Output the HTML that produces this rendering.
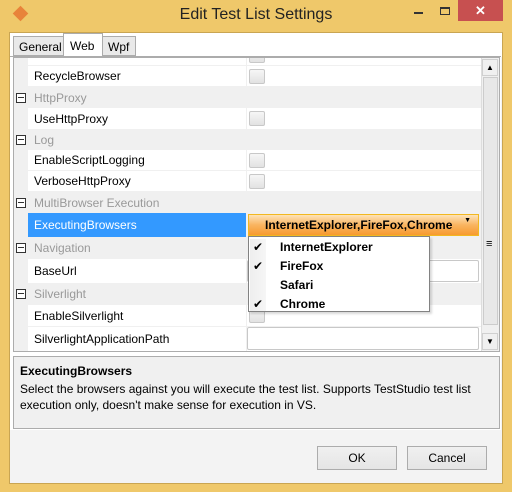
<!DOCTYPE html><html><head><style>
*{box-sizing:border-box;margin:0;padding:0}
body{width:512px;height:492px;background:#efc86a;font-family:"Liberation Sans",sans-serif;font-size:12px;position:relative;overflow:hidden;color:#000}
.a{position:absolute}
.title{left:0;top:6px;width:512px;text-align:center;font-size:16px;color:#222}
.client{left:9px;top:32px;width:494px;height:452px;background:#f3f3f3;border:1px solid #c9a552}
.tab{top:36px;height:20px;border:1px solid #acacac;background:#e9e9e9;font-size:12px;padding:3px 5px 0}
.cat{left:14px;width:467px;background:#f0f0f0;color:#999}
.cat span{position:absolute;left:20px;top:50%;transform:translateY(-50%)}
.box{position:absolute;left:2px;top:50%;margin-top:-5px;width:10px;height:10px;border:1px solid #333;background:#fff}
.box:after{content:"";position:absolute;left:1px;top:3px;width:6px;height:1px;background:#333}
.prop{left:28px;width:218px;background:#fff;padding-left:6px}
.val{left:247px;width:234px;background:#fff;overflow:hidden}
.cb{position:absolute;left:2px;top:3px;width:16px;height:15px;border:1px solid #c8c8c8;background:linear-gradient(#f6f6f6,#e2e2e2);border-radius:2px}
.row{display:flex;align-items:center}
</style></head><body>
<div class="a" style="left:15px;top:8px;width:11px;height:11px;background:#e8833a;transform:rotate(45deg)"></div>
<div class="a title">Edit Test List Settings</div>
<div class="a" style="left:414px;top:12px;width:9px;height:2px;background:#333"></div>
<div class="a" style="left:440px;top:7px;width:10px;height:8px;border:1px solid #333;border-top-width:2px"></div>
<div class="a" style="left:458px;top:0;width:45px;height:21px;background:#c75050;color:#fff;text-align:center;font-size:13px;font-weight:bold;line-height:21px">✕</div>
<div class="a client"></div>
<div class="a" style="left:10px;top:33px;width:492px;height:24px;background:#fff"></div>
<div class="a tab" style="left:13px;width:51px">General</div>
<div class="a tab" style="left:102px;width:34px">Wpf</div>
<div class="a" style="left:63px;top:33px;width:40px;height:24px;background:#fff;border:1px solid #acacac;border-bottom:none;padding:5px 0 0 6px;font-size:12px">Web</div>
<div class="a" style="left:10px;top:56px;width:491px;height:374px;background:#fff;border-top:1px solid #acacac"></div>
<div class="a" style="left:13px;top:57px;width:487px;height:295px;border:1px solid #acacac;background:#f0f0f0"></div>
<div class="a" style="left:14px;top:58px;width:14px;height:293px;background:#f0f0f0"></div>
<div class="a prop" style="top:58px;height:7px"></div><div class="a val" style="top:58px;height:7px"><div class="cb" style="top:-10px"></div></div>
<div class="a prop row" style="top:66px;height:20px">RecycleBrowser</div><div class="a val" style="top:66px;height:20px"><div class="cb"></div></div>
<div class="a cat" style="top:87px;height:21px"><div class="box"></div><span>HttpProxy</span></div>
<div class="a prop row" style="top:108px;height:21px">UseHttpProxy</div><div class="a val" style="top:108px;height:21px"><div class="cb"></div></div>
<div class="a cat" style="top:129px;height:21px"><div class="box"></div><span>Log</span></div>
<div class="a prop row" style="top:150px;height:20px">EnableScriptLogging</div><div class="a val" style="top:150px;height:20px"><div class="cb"></div></div>
<div class="a prop row" style="top:171px;height:20px">VerboseHttpProxy</div><div class="a val" style="top:171px;height:20px"><div class="cb"></div></div>
<div class="a cat" style="top:192px;height:21px"><div class="box"></div><span>MultiBrowser Execution</span></div>
<div class="a prop row" style="top:213px;height:24px;background:#3399ff;color:#fff">ExecutingBrowsers</div>
<div class="a cat" style="top:237px;height:22px"><div class="box"></div><span>Navigation</span></div>
<div class="a prop row" style="top:259px;height:24px">BaseUrl</div><div class="a val" style="top:259px;height:24px"><div class="a" style="left:0;top:1px;width:232px;height:22px;border:1px solid #c8c8c8;border-radius:2px"></div></div>
<div class="a cat" style="top:283px;height:22px"><div class="box"></div><span>Silverlight</span></div>
<div class="a prop row" style="top:305px;height:21px">EnableSilverlight</div><div class="a val" style="top:305px;height:21px"><div class="cb"></div></div>
<div class="a prop row" style="top:327px;height:24px">SilverlightApplicationPath</div><div class="a val" style="top:327px;height:24px"><div class="a" style="left:0;top:0;width:232px;height:23px;border:1px solid #c8c8c8;border-radius:2px"></div></div>
<div class="a" style="left:481px;top:58px;width:18px;height:293px;background:#f0f0f0;border-left:1px solid #ddd"></div>
<div class="a" style="left:482px;top:59px;width:16px;height:17px;background:#f0f0f0;border:1px solid #d0d0d0;font-size:8px;text-align:center;line-height:15px">▲</div>
<div class="a" style="left:482px;top:333px;width:16px;height:17px;background:#f0f0f0;border:1px solid #d0d0d0;font-size:8px;text-align:center;line-height:15px">▼</div>
<div class="a" style="left:483px;top:77px;width:15px;height:248px;background:#e8e8e8;border:1px solid #ccc"></div>
<div class="a" style="left:486px;top:238px;font-size:11px">≡</div>
<div class="a" style="left:248px;top:214px;width:231px;height:22px;border:1px solid #f2b820;background:linear-gradient(#fde3b8,#f9b460 50%,#f79a30);font-weight:bold;font-size:12px;padding:3px 0 0 16px">InternetExplorer,FireFox,Chrome<span style="position:absolute;right:7px;top:2px;font-size:7px">▼</span></div>
<div class="a" style="left:248px;top:236px;width:182px;height:76px;background:#fff;border:1px solid #828282;box-shadow:2px 2px 2px rgba(0,0,0,.15)">
<div style="position:absolute;left:1px;top:2px;width:16px;height:72px;background:linear-gradient(90deg,#eee,#f6f6f6)"></div>
<div style="position:absolute;left:31px;top:1px;font-weight:bold;line-height:19px">InternetExplorer<br>FireFox<br>Safari<br>Chrome</div>
<div style="position:absolute;left:4px;top:1px;width:15px;line-height:19px;font-size:12px">✔<br>✔<br>&nbsp;<br>✔</div>
</div>
<div class="a" style="left:13px;top:356px;width:487px;height:73px;border:1px solid #acacac;background:#f0f0f0;padding:7px 6px">
<div style="font-weight:bold;margin-bottom:3px">ExecutingBrowsers</div>
<div style="line-height:16px">Select the browsers against you will execute the test list. Supports TestStudio test list execution only, doesn't make sense for execution in VS.</div></div>
<div class="a" style="left:317px;top:446px;width:80px;height:24px;border:1px solid #acacac;background:linear-gradient(#f0f0f0,#e5e5e5);text-align:center;line-height:22px">OK</div>
<div class="a" style="left:407px;top:446px;width:80px;height:24px;border:1px solid #acacac;background:linear-gradient(#f0f0f0,#e5e5e5);text-align:center;line-height:22px">Cancel</div>
</body></html>
